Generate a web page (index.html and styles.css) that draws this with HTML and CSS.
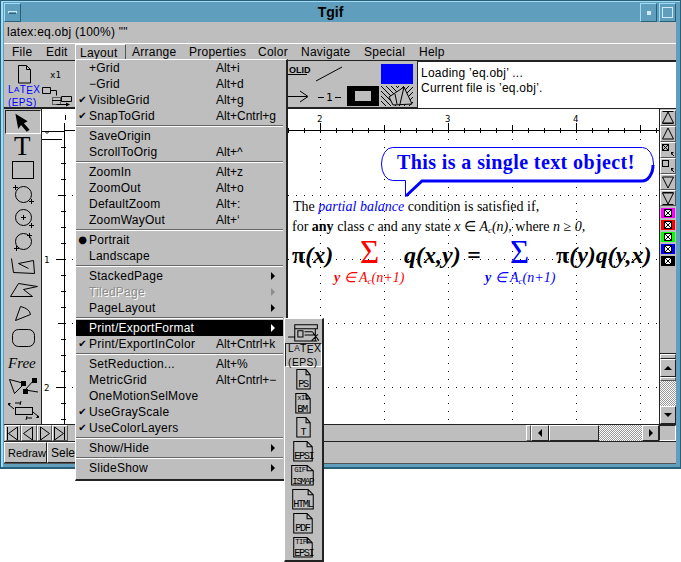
FILE: index.html
```html
<!DOCTYPE html>
<html>
<head>
  <title>Tgif</title>
  <link rel="stylesheet" href="styles.css">
</head>
<body>
<div class="window">
  <div class="titlebar">
    <div class="wm-btn wm-left"><span class="wm-dash"></span></div>
    <div class="wm-title">Tgif</div>
    <div class="wm-btn wm-min"><span class="wm-dot"></span></div>
    <div class="wm-btn wm-max"><span class="wm-square"></span></div>
  </div>
  <div class="filebar">latex:eq.obj (100%) ""</div>
  <div class="menubar">
    <span>File</span><span>Edit</span><span class="menu-open">Layout</span><span>Arrange</span><span>Properties</span><span>Color</span><span>Navigate</span><span>Special</span><span>Help</span>
  </div>
  <div class="toolbar">
    <svg class="tool-left" viewBox="4 61 72 47" width="72" height="47">
      <path class="ln" d="M18.5 65.5h8l4 4v13.5h-12zM26.500 65.500v4h4"/>
      <text x="50" y="78" class="tiny">x1</text>
      <text x="8" y="93" class="bluetext">L<tspan class="logo-a" dy="-1">A</tspan><tspan dy="1">T</tspan><tspan dy="1">E</tspan><tspan dy="-1">X</tspan></text>
      <text x="8" y="106" class="bluetext">(EPS)</text>
      <path class="ln" d="M42.500 87.500h8v6h-8zM50.500 90.500h6v5M61.500 96.500h10v5h-10zM52 100.500l9 0M56.500 104.500h10"/>
      <path class="dots" d="M52.500 97.500h8v7h-8z"/>
      <path d="M66 102.500l4 2-4 2z"/>
    </svg>
    <svg class="tool-right" viewBox="287 61 130 47" width="130" height="47">
      <defs>
        <pattern id="hatch" width="5" height="5" patternUnits="userSpaceOnUse">
          <path d="M0 0l5 5" stroke="#000" fill="none"/>
        </pattern>
        <pattern id="hatch2" width="5" height="5" patternUnits="userSpaceOnUse">
          <path d="M5 0l-5 5" stroke="#000" fill="none"/>
        </pattern>
      </defs>
      <text x="289" y="73" class="tiny solid">OLID</text>
      <path class="ln" d="M287 74.500h20M316 81l26-14"/>
      <path class="ln" d="M287 96.500h20M300 91l8 5.500-8 5.500M318 97.500h6M335 97.500h6"/>
      <text x="326" y="101" class="tiny one">1</text>
      <rect x="381" y="64" width="32" height="20" fill="#0000ff"/>
      <rect x="347" y="86" width="32" height="20"/>
      <rect x="355" y="91" width="16" height="10" fill="#bebebe"/>
      <rect x="381" y="86" width="16" height="20" fill="url(#hatch)"/>
      <rect x="397" y="86" width="16" height="20" fill="url(#hatch2)"/>
      <path class="ln hatchfill" d="M389 97l15-10 8 17-19 1z"/>
      <path class="ln" d="M395 94l2 10M404 87l-4 17"/>
    </svg>
    <div class="msgbox">
      <div>Loading ’eq.obj’ ...</div>
      <div>Current file is ’eq.obj’.</div>
    </div>
  </div>
  <div class="main">
    <div class="toolcol">
      <div class="tool tool-on"><svg viewBox="5 110 37 24"><path d="M16 114l13 8-4 2 6 7-3 2-6-7-3 4z"/></svg></div>
      <div class="tool"><svg viewBox="5 134 37 24"><text x="14" y="155" class="big-t">T</text></svg></div>
      <div class="tool"><svg viewBox="5 158 37 24"><rect class="ln" x="12.500" y="161.500" width="21" height="17"/></svg></div>
      <div class="tool"><svg viewBox="5 182 37 24"><circle class="ln" cx="23.500" cy="194.500" r="8"/><path class="ln" d="M13 187.500h5M15.500 185v5M29 201.500h5M31.500 199v5"/></svg></div>
      <div class="tool"><svg viewBox="5 206 37 24"><circle class="ln" cx="23.500" cy="217.500" r="8"/><path class="ln" d="M21 217.500h5M23.500 215v5M29 225.500h5M31.500 223v5"/></svg></div>
      <div class="tool"><svg viewBox="5 230 37 24"><circle class="ln" cx="23.500" cy="241.500" r="8"/><path class="ln" d="M27 235.500h5M29.500 233v5M14 248.500h5M16.500 246v5"/></svg></div>
      <div class="tool"><svg viewBox="5 254 37 24"><path class="ln" d="M11.500 258.500l2 14 21 1-1-13-15 3 10 5"/></svg></div>
      <div class="tool"><svg viewBox="5 278 37 24"><path class="ln" d="M10.500 296.500l8-13 19 3-14 3 9 7z"/></svg></div>
      <div class="tool"><svg viewBox="5 302 37 24"><path class="ln" d="M20.500 306.500q9 2 10 8l-15 6z"/></svg></div>
      <div class="tool"><svg viewBox="5 326 37 24"><rect class="ln" x="12.500" y="329.500" width="22" height="17" rx="6"/></svg></div>
      <div class="tool"><svg viewBox="5 350 37 24"><text x="8" y="368" class="free">Free</text></svg></div>
      <div class="tool"><svg viewBox="5 374 37 24"><path class="ln" d="M9.500 379.500l15 4-10 10zM34 380l-9 10 13 2"/><rect x="21" y="381" width="5" height="5"/><rect x="32" y="378" width="5" height="5"/><rect x="23" y="389" width="5" height="5"/></svg></div>
      <div class="tool"><svg viewBox="5 398 37 24"><rect class="ln" x="15.500" y="407.500" width="17" height="7"/><path class="ln" d="M8 404l6 5M39 417l-6-5M15 403h6M26 418h6M20 405l1-4M27 416l-1 4"/><path d="M8 403l3 0-2 3zM39 418l-3 0 2-3z"/></svg></div>
    </div>
    <svg class="canvas" viewBox="42 109 617 315" width="617" height="315">
      <defs>
        <pattern id="griddots" x="64" y="131" width="64" height="64" patternUnits="userSpaceOnUse">
          <path class="griddot" d="M0 0h1v1h-1zM8 0h1v1h-1zM16 0h1v1h-1zM24 0h1v1h-1zM32 0h1v1h-1zM40 0h1v1h-1zM48 0h1v1h-1zM56 0h1v1h-1zM0 8h1v1h-1zM0 16h1v1h-1zM0 24h1v1h-1zM0 32h1v1h-1zM0 40h1v1h-1zM0 48h1v1h-1zM0 56h1v1h-1z"/>
        </pattern>
        <pattern id="xminor" x="64" y="128" width="16" height="5" patternUnits="userSpaceOnUse"><rect width="1" height="5"/></pattern>
        <pattern id="xmid" x="64" y="125" width="64" height="8" patternUnits="userSpaceOnUse"><rect width="1" height="8"/></pattern>
        <pattern id="xmajor" x="64" y="123" width="128" height="10" patternUnits="userSpaceOnUse"><rect width="1" height="10"/></pattern>
        <pattern id="yminor" x="61" y="131" width="5" height="16" patternUnits="userSpaceOnUse"><rect width="5" height="1"/></pattern>
        <pattern id="ymid" x="58" y="131" width="8" height="64" patternUnits="userSpaceOnUse"><rect width="8" height="1"/></pattern>
        <pattern id="ymajor" x="56" y="131" width="10" height="128" patternUnits="userSpaceOnUse"><rect width="10" height="1"/></pattern>
      </defs>
      <rect x="65" y="132" width="594" height="292" fill="url(#griddots)"/>

      <!-- rulers -->
      <rect x="65" y="130" width="594" height="1"/>
      <rect x="64" y="128" width="595" height="5" fill="url(#xminor)"/>
      <rect x="64" y="125" width="595" height="8" fill="url(#xmid)"/>
      <rect x="64" y="123" width="595" height="10" fill="url(#xmajor)"/>
      <rect x="64" y="131" width="1" height="293"/>
      <rect x="61" y="147" width="5" height="277" fill="url(#yminor)"/>
      <rect x="58" y="195" width="8" height="229" fill="url(#ymid)"/>
      <rect x="56" y="259" width="10" height="165" fill="url(#ymajor)"/>
      <rect x="42" y="131" width="23" height="1"/>
      <rect x="42" y="139" width="20" height="1"/>
      <rect x="65" y="115" width="1" height="5"/>
      <path class="ln" d="M45 131.500l2 2 2-2"/>
      <text x="317" y="122" class="tiny">2</text>
      <text x="445" y="122" class="tiny">3</text>
      <text x="573" y="122" class="tiny">4</text>
      <text x="44" y="263" class="tiny">1</text>
      <text x="44" y="391" class="tiny">2</text>

      <!-- callout -->
      <path class="callout" d="M405.500 180.500h-13a11 16.500 0 0 1 0-33h250a11 16.500 0 0 1 0 33h-221l-16 16z"/>
      <path class="callout-shadow" d="M406 196l16-15h220a11 16 0 0 0 11-16"/>
      <text x="397" y="169" class="callout-text">This is a single text object!</text>

      <!-- equation -->
      <text x="293" y="211" class="para">The <tspan class="blue-it">partial balance</tspan> condition is satisfied if,</text>
      <text x="292" y="231" class="para">for <tspan class="b">any</tspan> class <tspan class="it">c</tspan> and any state <tspan class="it">x</tspan> ∈ <tspan class="it">A</tspan><tspan class="it subs" dy="2">c</tspan><tspan class="it" dy="-2">(n),</tspan> where <tspan class="it">n</tspan> ≥ <tspan class="it">0,</tspan></text>
      <text x="292" y="263" class="eq"><tspan class="up">π</tspan>(x)</text>
      <text x="404" y="263" class="eq">q(x,y)</text>
      <text x="467" y="263" class="eq">=</text>
      <text x="556" y="263" class="eq"><tspan class="up">π</tspan>(y)q(y,x)</text>
      <text x="360" y="263" class="sigma red">Σ</text>
      <text x="510" y="263" class="sigma blue">Σ</text>
      <text x="334" y="282" class="lim red"><tspan class="b">y</tspan> ∈ A<tspan class="subs" dy="2">c</tspan><tspan dy="-2">(n+1)</tspan></text>
      <text x="485" y="282" class="lim blue"><tspan class="b">y</tspan> ∈ A<tspan class="subs" dy="2">c</tspan><tspan dy="-2">(n+1)</tspan></text>
    </svg>
    <div class="side">
      <div class="pal"><svg viewBox="0 0 16 16"><path class="ln" d="M2.500 1.500h11M8 2l-5.500 11h11zM2.500 13.500h11"/></svg></div>
      <div class="pal"><svg viewBox="0 0 16 16"><path class="ln" d="M8 2l-5.500 11h11z"/></svg></div>
      <div class="pal"><svg viewBox="0 0 16 16"><rect class="ln" x="2.500" y="2.500" width="6" height="6"/><path class="ln" d="M3 3l5 5M8 3l-5 5M11 11l3 3"/><path d="M11 10h3l-3 3z"/></svg></div>
      <div class="pal"><svg viewBox="0 0 16 16"><rect class="ln" x="2.500" y="2.500" width="6" height="6"/><path class="ln" d="M11 11l3 3"/><path d="M11 10h3l-3 3z"/></svg></div>
      <div class="pal"><svg viewBox="0 0 16 16"><path class="ln" d="M8 14l-5.500-11h11z"/></svg></div>
      <div class="pal"><svg viewBox="0 0 16 16"><path class="ln" d="M2.500 14.500h11M8 14l-5.500-11h11zM2.500 2.500h11"/></svg></div>
      <div class="swatch sw-magenta"><span></span></div>
      <div class="swatch sw-red"><span></span></div>
      <div class="swatch sw-green"><span></span></div>
      <div class="swatch sw-blue"><span></span></div>
      <div class="swatch sw-black"><span></span></div>
      <div class="v-thumb"></div>
      <div class="v-strip"></div>
      <div class="v-btn"><i class="tri-up"></i></div>
      <div class="v-strip2"></div>
      <div class="stipple v-gap"></div>
      <div class="v-btn"><i class="tri-down"></i></div>
    </div>
  </div>
  <div class="hbar">
    <div class="pagetabs">
      <div class="pg"><svg viewBox="0 0 15 17"><path class="ln" d="M2.500 2v13M12.500 2l-9 6.500 9 6.500z"/></svg></div>
      <div class="pg"><svg viewBox="0 0 15 17"><path class="ln" d="M11.500 2l-9 6.500 9 6.500z"/></svg></div>
      <div class="pg"><svg viewBox="0 0 15 17"><path class="ln" d="M3.500 2l9 6.500-9 6.500z"/></svg></div>
      <div class="pg"><svg viewBox="0 0 15 17"><path class="ln" d="M12.500 2v13M2.500 2l9 6.500-9 6.500z"/></svg></div>
    </div>
    <div class="h-fill"></div>
    <div class="h-strip"></div>
    <div class="h-btn"><i class="tri-left"></i></div>
    <div class="h-thumb"></div>
    <div class="stipple h-gap"></div>
    <div class="h-btn h-right"><i class="tri-right"></i></div>
    <div class="h-corner"></div>
  </div>
  <div class="status">
    <div class="st-btn">Redraw</div>
    <div class="st-btn st-sel">Sele</div>
  </div>
</div>

<div class="menu">
  <div class="item"><b></b><span>+Grid</span><em>Alt+i</em></div>
  <div class="item"><b></b><span>−Grid</span><em>Alt+d</em></div>
  <div class="item"><b>✔</b><span>VisibleGrid</span><em>Alt+g</em></div>
  <div class="item"><b>✔</b><span>SnapToGrid</span><em>Alt+Cntrl+g</em></div>
  <div class="sep"></div>
  <div class="item"><b></b><span>SaveOrigin</span><em></em></div>
  <div class="item"><b></b><span>ScrollToOrig</span><em>Alt+^</em></div>
  <div class="sep"></div>
  <div class="item"><b></b><span>ZoomIn</span><em>Alt+z</em></div>
  <div class="item"><b></b><span>ZoomOut</span><em>Alt+o</em></div>
  <div class="item"><b></b><span>DefaultZoom</span><em>Alt+:</em></div>
  <div class="item"><b></b><span>ZoomWayOut</span><em>Alt+‘</em></div>
  <div class="sep"></div>
  <div class="item"><b>●</b><span>Portrait</span><em></em></div>
  <div class="item"><b></b><span>Landscape</span><em></em></div>
  <div class="sep"></div>
  <div class="item sub"><b></b><span>StackedPage</span><em></em></div>
  <div class="item sub off"><b></b><span>TiledPage</span><em></em></div>
  <div class="item sub"><b></b><span>PageLayout</span><em></em></div>
  <div class="sep"></div>
  <div class="item sub on"><b></b><span>Print/ExportFormat</span><em></em></div>
  <div class="item"><b>✔</b><span>Print/ExportInColor</span><em>Alt+Cntrl+k</em></div>
  <div class="sep"></div>
  <div class="item"><b></b><span>SetReduction...</span><em>Alt+%</em></div>
  <div class="item"><b></b><span>MetricGrid</span><em>Alt+Cntrl+−</em></div>
  <div class="item"><b></b><span>OneMotionSelMove</span><em></em></div>
  <div class="item"><b>✔</b><span>UseGrayScale</span><em></em></div>
  <div class="item"><b>✔</b><span>UseColorLayers</span><em></em></div>
  <div class="sep"></div>
  <div class="item sub"><b></b><span>Show/Hide</span><em></em></div>
  <div class="sep"></div>
  <div class="item sub"><b></b><span>SlideShow</span><em></em></div>
</div>

<div class="submenu">
  <div class="fmt"><svg viewBox="0 0 36 24"><path class="ln" d="M9.500 5.500h22v4h-22zM9.500 9.500v12h20v-12M12.500 11.500h5v6h-5zM19 12.500h8M19 15.500h10M3 17.500h7M27 13l6 8M26 21l6-6M9.500 21.500h22"/></svg></div>
  <div class="fmt fmt-on"><svg viewBox="0 0 36 24"><text x="3" y="9" class="doc-big">L<tspan class="logo-a" dy="-1">A</tspan><tspan dy="1">T</tspan><tspan dy="1">E</tspan><tspan dy="-1">X</tspan></text><text x="3" y="22" class="doc-big">(EPS)</text></svg></div>
  <div class="fmt"><svg viewBox="0 0 36 24"><path class="ln" d="M11.500 2.500h9l4 5v14h-13zM20.500 2.500v5h4"/><text x="13" y="19" class="doc">PS</text></svg></div>
  <div class="fmt"><svg viewBox="0 0 36 24"><path class="ln" d="M10.500 2.500h10l4 5v14h-14zM20.500 2.500v5h4"/><text x="12" y="9" class="doc-s">xII</text><text x="12" y="20" class="doc">BM</text></svg></div>
  <div class="fmt"><svg viewBox="0 0 36 24"><path class="ln" d="M11.500 2.500h9l4 5v14h-13zM20.500 2.500v5h4"/><text x="15" y="19" class="doc">T</text></svg></div>
  <div class="fmt"><svg viewBox="0 0 36 24"><path class="ln" d="M8.500 2.500h13l5 5v14h-18zM21.500 2.500v5h5"/><text x="9" y="19" class="doc">EPSI</text></svg></div>
  <div class="fmt"><svg viewBox="0 0 36 24"><path class="ln" d="M6.500 2.500h15l6 5v14h-21zM21.500 2.500v5h6"/><text x="9" y="9" class="doc-s">GIF</text><text x="7" y="20" class="doc doc-n">ISMAP</text></svg></div>
  <div class="fmt"><svg viewBox="0 0 36 24"><path class="ln" d="M7.500 2.500h15l5 5v14h-20zM22.500 2.500v5h5"/><text x="8" y="19" class="doc">HTML</text></svg></div>
  <div class="fmt"><svg viewBox="0 0 36 24"><path class="ln" d="M8.500 2.500h13l5 5v14h-18zM21.500 2.500v5h5"/><text x="10" y="19" class="doc">PDF</text></svg></div>
  <div class="fmt"><svg viewBox="0 0 36 24"><path class="ln" d="M8.500 2.500h13l5 5v14h-18zM21.500 2.500v5h5"/><text x="10" y="9" class="doc-s">TIFF</text><text x="9" y="20" class="doc">EPSI</text></svg></div>
</div>
</body>
</html>
```

FILE: styles.css
```css
* {
  box-sizing: border-box;
}

body {
  margin: 0;
  position: relative;
  width: 681px;
  height: 562px;
  overflow: hidden;
  background-color: white;
  font-family: "Liberation Sans", Arial, sans-serif;
  font-size: 12px;
  letter-spacing: 0.25px;
  color: black;
}

svg {
  display: block;
  overflow: visible;
}

/* window frame */
.window {
  width: 681px;
  height: 469px;
  padding: 3px 4px 5px 3px;
  background-color: #5f9ebd;
  border: 1px solid #2a5f78;
  border-width: 1px 1px 2px 1px;
  box-shadow: inset 2px 1px 0 #9fdcf5;
}

.titlebar {
  display: flex;
  height: 19px;
  margin-top: -1px;
}

.wm-btn {
  display: flex;
  align-items: center;
  justify-content: center;
  width: 17px;
  border: 1px solid;
  border-color: #9fdcf5 #2a5f78 #2a5f78 #9fdcf5;
}

.wm-title {
  flex: 1;
  text-align: center;
  font-size: 14px;
  font-weight: bold;
  line-height: 18px;
  letter-spacing: 0;
}

.wm-min {
  margin-right: 2px;
}

.wm-dash {
  width: 9px;
  height: 3px;
  border: 1px solid #cfeaf5;
  border-bottom-color: #2a5f78;
}

.wm-dot {
  width: 4px;
  height: 4px;
  background-color: #cfeaf5;
}

.wm-square {
  width: 11px;
  height: 11px;
  border: 1px solid #cfeaf5;
}

.filebar {
  height: 22px;
  padding-left: 3px;
  line-height: 21px;
  background-color: #bebebe;
  border-bottom: 1px solid white;
}

.menubar {
  display: grid;
  grid-template-columns: 34px 34px 52px 57px 69px 43px 63px 55px auto;
  height: 17px;
  padding-left: 8px;
  line-height: 17px;
  background-color: #bebebe;
  border-bottom: 1px solid #222;
}

.menu-open {
  margin-left: -5px;
  padding-left: 4px;
  width: 51px;
  border: 1px solid;
  border-color: white #555 transparent white;
  line-height: 16px;
}

.toolbar {
  display: flex;
  height: 48px;
  background-color: #bebebe;
  border-bottom: 2px solid #222;
}

.tool-right {
  margin-left: auto;
}

.msgbox {
  width: 259px;
  height: 47px;
  padding: 4px 0 0 3px;
  line-height: 15px;
  background-color: white;
  border-top: 1px solid #222;
  border-left: 1px solid #222;
}

.ln {
  fill: none;
  stroke: black;
  stroke-width: 1;
}

.dots {
  fill: none;
  stroke: black;
  stroke-dasharray: 1 1;
}

.hatchfill {
  fill: #bebebe;
}

.tiny {
  font-family: "DejaVu Sans Mono", monospace;
  font-size: 9px;
  letter-spacing: 0;
}

.solid {
  font-family: "Liberation Sans", sans-serif;
  font-size: 9px;
  font-weight: bold;
}

.one {
  font-size: 11px;
}

.bluetext {
  font-family: "Liberation Sans", sans-serif;
  font-size: 10px;
  fill: #0000ff;
  letter-spacing: 0.4px;
}

.logo-a {
  font-size: 8px;
}

/* main area */
.main {
  display: flex;
  height: 315px;
  background-color: #bebebe;
}

.toolcol {
  width: 38px;
  padding: 1px 0 0 1px;
  border-right: 1px solid #222;
}

.tool {
  width: 37px;
  height: 24px;
}

.tool-on {
  border: 1px solid;
  border-color: #222 white white #222;
  width: 36px;
}

.tool-on svg {
  margin: -1px 0 0 -1px;
}

.big-t {
  font-family: "Liberation Serif", serif;
  font-size: 27px;
}

.free {
  font-family: "Liberation Serif", serif;
  font-style: italic;
  font-size: 15px;
  letter-spacing: 0;
}

.canvas {
  background-color: white;
}

.griddot {
  fill: black;
}

.callout {
  fill: white;
  stroke: #0000ff;
  stroke-width: 1;
}

.callout-shadow {
  fill: none;
  stroke: #0000ff;
  stroke-width: 3;
}

.callout-text {
  font-family: "Liberation Serif", serif;
  font-weight: bold;
  font-size: 20px;
  letter-spacing: 0.4px;
  fill: #0000ff;
}

.para {
  font-family: "Liberation Serif", serif;
  font-size: 14px;
  letter-spacing: 0;
}

.blue-it {
  font-style: italic;
  fill: #0000ff;
}

.b {
  font-weight: bold;
}

.it {
  font-style: italic;
}

.subs {
  font-size: 9px;
}

.eq {
  font-family: "Liberation Serif", serif;
  font-style: italic;
  font-weight: bold;
  font-size: 24px;
  letter-spacing: 0;
}

.up {
  font-style: normal;
}

.sigma {
  font-family: "Liberation Serif", serif;
  font-size: 33px;
  letter-spacing: 0;
}

.lim {
  font-family: "Liberation Serif", serif;
  font-style: italic;
  font-size: 14px;
  letter-spacing: 0;
}

.red {
  fill: #ff0000;
}

.blue {
  fill: #0000ff;
}

/* right side palette and scrollbar */
.side {
  display: flex;
  flex-direction: column;
  width: 17px;
  padding-top: 1px;
  border-left: 1px solid #222;
}

.pal {
  height: 16px;
  border: 1px solid;
  border-color: white #555 #555 white;
}

.pal svg {
  margin: -1px;
  width: 16px;
  height: 16px;
}

.swatch {
  display: flex;
  align-items: center;
  justify-content: center;
  height: 12px;
  border: 1px solid #bebebe;
}

.swatch span {
  width: 8px;
  height: 8px;
  background-color: white;
  border: 1px solid black;
  background-image: linear-gradient(45deg, transparent 44%, black 44% 56%, transparent 56%), linear-gradient(-45deg, transparent 44%, black 44% 56%, transparent 56%);
}

.sw-magenta { background-color: #ff00ff; margin-top: 1px; }
.sw-red { background-color: #ff0000; }
.sw-green { background-color: #00ff00; }
.sw-blue { background-color: #0000ff; }
.sw-black { background-color: black; }

.v-thumb {
  height: 87px;
  border-bottom: 1px solid #222;
}

.v-strip {
  height: 5px;
  border: 1px solid;
  border-color: white #555 #222 white;
}

.v-strip2 {
  height: 4px;
  border: 1px solid;
  border-color: white #555 #555 white;
}

.v-btn {
  display: flex;
  align-items: center;
  justify-content: center;
  height: 18px;
  border: 1px solid;
  border-color: white #222 #222 white;
}

.stipple {
  background-color: white;
  background-image: repeating-conic-gradient(#999 0 25%, white 0 50%);
  background-size: 2px 2px;
}

.v-gap {
  flex: 1;
}

.tri-up, .tri-down, .tri-left, .tri-right {
  display: block;
  width: 0;
  height: 0;
  border: 4px solid transparent;
}

.tri-up { border-bottom-color: black; margin-top: -4px; }
.tri-down { border-top-color: black; margin-top: 4px; }
.tri-left { border-right-color: black; margin-left: -4px; }
.tri-right { border-left-color: black; margin-left: 4px; }

/* bottom scrollbar row */
.hbar {
  display: flex;
  height: 18px;
  background-color: #bebebe;
  border-top: 1px solid #222;
  border-bottom: 1px solid #222;
}

.pagetabs {
  display: flex;
  width: 64px;
  padding-left: 1px;
}

.pg {
  width: 16px;
  border: 1px solid;
  border-color: white #555 #555 white;
}

.pg svg {
  margin: -1px;
  height: 17px;
}

.h-fill {
  width: 458px;
}

.h-strip {
  width: 5px;
  border: 1px solid;
  border-color: white #555 #555 white;
}

.h-btn {
  display: flex;
  align-items: center;
  justify-content: center;
  width: 18px;
  border: 1px solid;
  border-color: white #222 #222 white;
}

.h-right {
  width: 17px;
}

.h-thumb {
  width: 50px;
  border: 1px solid;
  border-color: white #222 #222 white;
}

.h-gap {
  width: 43px;
}

.h-corner {
  flex: 1;
  border: 1px solid;
  border-color: #222 white white #222;
}

.status {
  display: flex;
  height: 22px;
  background-color: #bebebe;
  border-bottom: 1px solid #555;
}

.st-btn {
  width: 43px;
  padding-left: 3px;
  font-size: 11px;
  line-height: 20px;
  border: 1px solid;
  border-color: white #222 #222 white;
  letter-spacing: 0;
}

.st-sel {
  width: 120px;
  font-size: 12px;
}

/* pull down menus */
.menu {
  position: absolute;
  left: 75px;
  top: 59px;
  width: 213px;
  height: 422px;
  padding: 0 3px 0 0;
  background-color: #bebebe;
  border: 1px solid;
  border-color: white #222 #222 white;
  border-width: 1px 2px 2px 1px;
}

.item {
  display: grid;
  grid-template-columns: 13px 127px 1fr;
  height: 16px;
  line-height: 16px;
  position: relative;
}

.item b {
  font-family: "DejaVu Sans", sans-serif;
  font-size: 10px;
  font-weight: normal;
  text-align: center;
  letter-spacing: 0;
}

.item em {
  font-style: normal;
  letter-spacing: 0;
}

.item.sub::after {
  content: "";
  position: absolute;
  right: 8px;
  top: 4px;
  border: 4px solid transparent;
  border-left-color: black;
  border-right-width: 0;
}

.item.off span {
  color: #8c8c8c;
  text-shadow: 1px 1px 0 white;
}

.item.off::after {
  border-left-color: #8c8c8c;
}

.item.on {
  background-color: black;
  color: white;
}

.item.on::after {
  border-left-color: white;
}

.sep {
  height: 3px;
  margin-top: 1px;
  border-top: 1px solid #666;
  box-shadow: inset 0 1px 0 white;
}

.submenu {
  position: absolute;
  left: 284px;
  top: 318px;
  width: 40px;
  height: 244px;
  background-color: #bebebe;
  border: 1px solid;
  border-color: white #222 #222 white;
  border-width: 1px 2px 2px 1px;
}

.fmt {
  height: 24px;
}

.fmt-on {
  border: 1px solid;
  border-color: #222 white white #222;
}

.fmt-on svg {
  margin: -1px;
}

.doc {
  font-family: "Liberation Mono", monospace;
  font-size: 10px;
  letter-spacing: -1.4px;
}

.doc-n {
  font-size: 9px;
  letter-spacing: -1.3px;
}

.doc-s {
  font-family: "Liberation Mono", monospace;
  font-size: 7px;
  letter-spacing: -0.6px;
}

.doc-big {
  font-family: "Liberation Sans", sans-serif;
  font-size: 10px;
  letter-spacing: 0.4px;
}
```
